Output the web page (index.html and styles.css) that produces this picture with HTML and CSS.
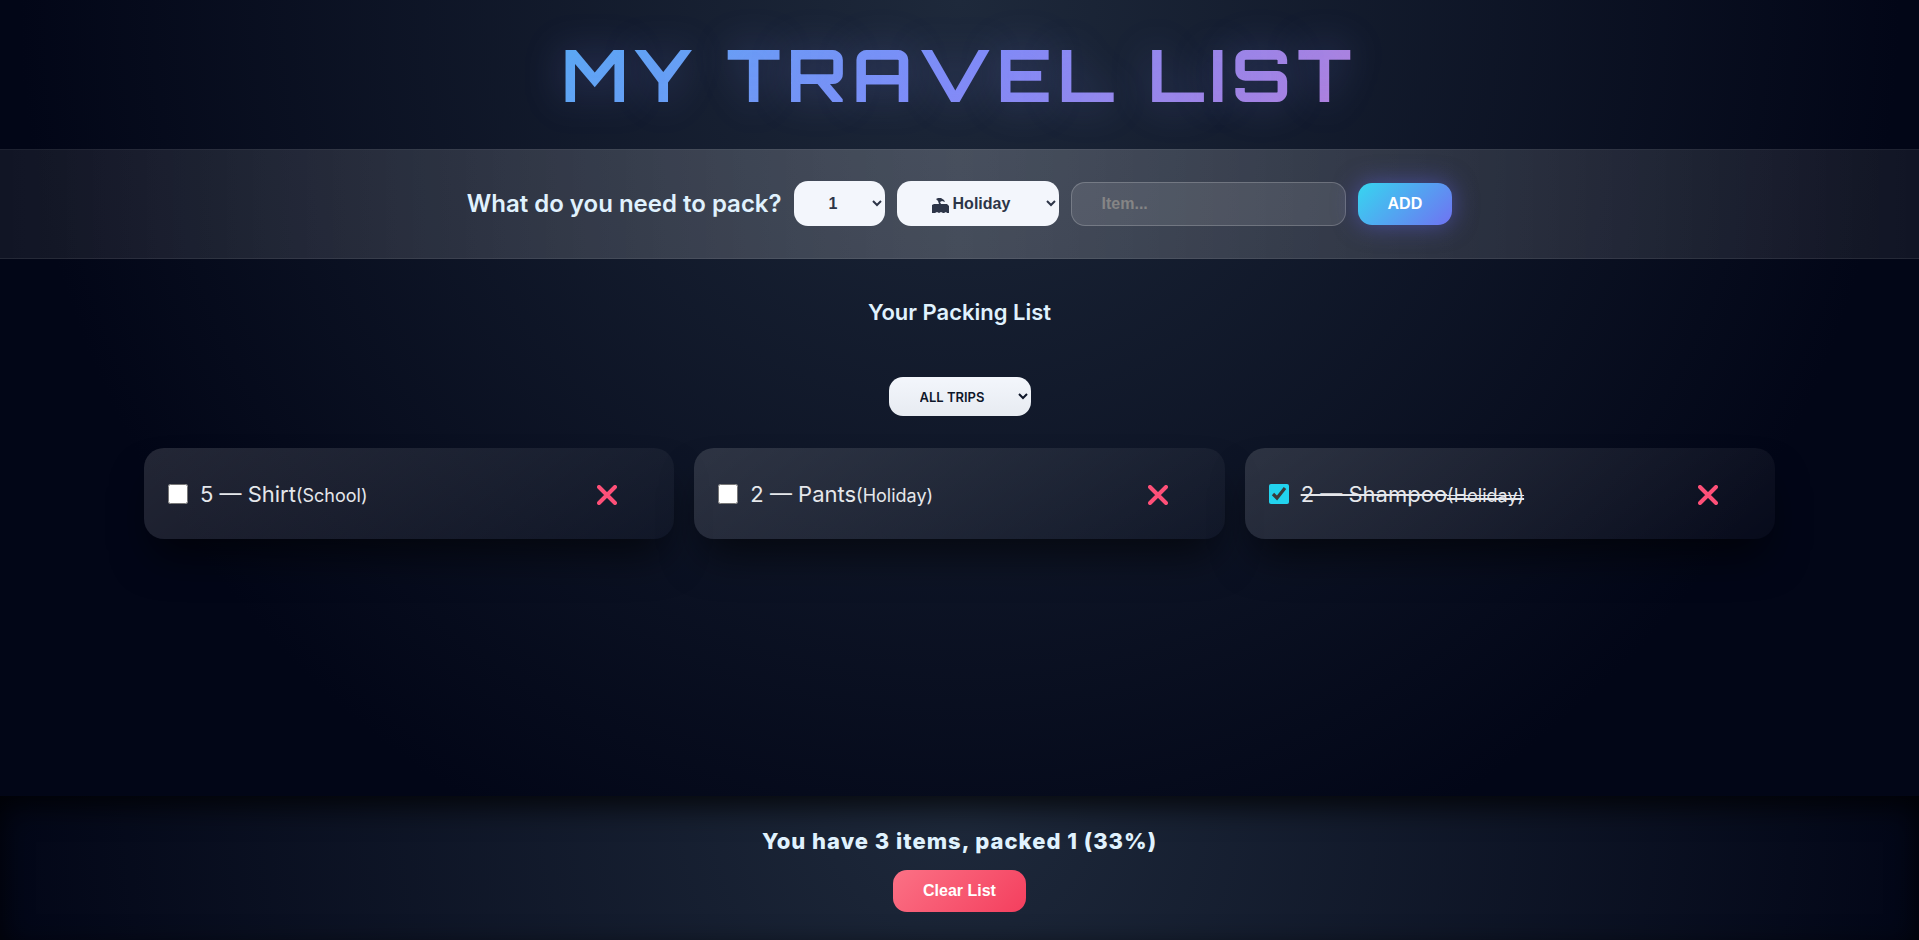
FILE: index.html
```html
<!DOCTYPE html>
<html lang="en">
<head>
    <meta charset="utf-8">
    <meta name="viewport" content="width=device-width, initial-scale=1">
    <title>My Travel List</title>
    <link rel="stylesheet" href="styles.css">
</head>
<body>
    <div class="app">
        <header class="header">
            <h1 class="title">My Travel List</h1>
        </header>

        <form class="add-form">
            <label class="add-label" for="item">What do you need to pack?</label>
            <select class="field qty" aria-label="Quantity">
                <option>1</option>
                <option>2</option>
                <option>3</option>
                <option>4</option>
                <option>5</option>
            </select>
            <div class="trip">
                <svg class="trip-icon" viewBox="0 0 17 17" aria-hidden="true">
                    <path d="M4 2 6 1H9L12 3 13 5 10 4 8 5 9 7H15L17 9V16H15L14 15 12 16H11L9 15 7 16 5 15 3 16H0V8L2 7H7L6 4Z"/>
                </svg>
                <select class="field trip-select" aria-label="Trip">
                    <option>Holiday</option>
                    <option>School</option>
                    <option>Work</option>
                </select>
            </div>
            <input class="item-input" id="item" type="text" placeholder="Item...">
            <button class="btn btn-add" type="submit">ADD</button>
        </form>

        <main class="list">
            <h2 class="list-title">Your Packing List</h2>
            <select class="filter" aria-label="Filter by trip">
                <option>ALL TRIPS</option>
                <option>HOLIDAY</option>
                <option>SCHOOL</option>
            </select>
            <ul class="items">
                <li class="item">
                    <input class="check" type="checkbox" id="item1">
                    <label class="item-text" for="item1">5 — Shirt<small>(School)</small></label>
                    <button class="remove" type="button" aria-label="Remove Shirt">
                        <svg viewBox="0 0 20 20"><path d="M2 2 18 18M18 2 2 18"/></svg>
                    </button>
                </li>
                <li class="item">
                    <input class="check" type="checkbox" id="item2">
                    <label class="item-text" for="item2">2 — Pants<small>(Holiday)</small></label>
                    <button class="remove" type="button" aria-label="Remove Pants">
                        <svg viewBox="0 0 20 20"><path d="M2 2 18 18M18 2 2 18"/></svg>
                    </button>
                </li>
                <li class="item">
                    <input class="check" type="checkbox" id="item3" checked>
                    <label class="item-text packed" for="item3">2 — Shampoo<small>(Holiday)</small></label>
                    <button class="remove" type="button" aria-label="Remove Shampoo">
                        <svg viewBox="0 0 20 20"><path d="M2 2 18 18M18 2 2 18"/></svg>
                    </button>
                </li>
            </ul>
        </main>

        <footer class="stats">
            <p class="stats-text">You have 3 items, packed 1 (33%)</p>
            <button class="btn btn-clear" type="button">Clear List</button>
        </footer>
    </div>
</body>
</html>
```
FILE: styles.css
```css
* {
    box-sizing: border-box;
    margin: 0;
    padding: 0;
}
body {
    font-family: Inter, "Liberation Sans", sans-serif;
    color: #e0f2fe;
    background-color: #020617;
}
.app {
    min-height: 100vh;
    display: flex;
    flex-direction: column;
    background: radial-gradient(circle at top, #1e293b, #020617 70%);
}

/* header */
.header {
    padding: 32px 0;
    text-align: center;
}
.title {
    font-family: Orbitron, "DejaVu Sans", sans-serif;
    font-size: 72px;
    line-height: 85px;
    font-weight: bold;
    letter-spacing: 6px;
    text-transform: uppercase;
    color: transparent;
    background: linear-gradient(135deg, #22d3ee, #818cf8, #f472b6);
    background-clip: text;
    -webkit-background-clip: text;
    text-shadow: 0 0 40px rgba(129, 140, 248, 0.3);
}

/* form */
.add-form {
    display: flex;
    flex-wrap: wrap;
    justify-content: center;
    align-items: center;
    gap: 12px;
    padding: 31px 0 32px;
    background: linear-gradient(90deg, rgba(255, 255, 255, 0.06), rgba(255, 255, 255, 0.2), rgba(255, 255, 255, 0.06));
    border-top: 1px solid rgba(255, 255, 255, 0.05);
    border-bottom: 1px solid rgba(255, 255, 255, 0.08);
}
.add-label {
    font-size: 24px;
    font-weight: 600;
}
.field, .item-input, .btn {
    font-family: "Liberation Sans", Arial, sans-serif;
    font-size: 16px;
    font-weight: bold;
    border: none;
    border-radius: 14px;
}
.field {
    height: 45px;
    padding: 0 26px;
    color: #2d3548;
    background: #f3f6fc;
    text-align: center;
}
.qty {
    width: 91px;
}
.trip {
    position: relative;
}
.trip-select {
    width: 162px;
    padding-left: 52px;
    text-align: left;
}
.trip-icon {
    position: absolute;
    left: 35px;
    top: 16px;
    width: 17px;
    height: 17px;
    fill: #2d3548;
    pointer-events: none;
}
.item-input {
    width: 275px;
    height: 44px;
    padding: 0 30px;
    color: #e0f2fe;
    background: rgba(255, 255, 255, 0.1);
    border: 1px solid rgba(255, 255, 255, 0.2);
}
.item-input::placeholder {
    color: #858585;
}
.btn {
    height: 42px;
    padding: 0 30px;
    color: #fff;
    cursor: pointer;
}
.btn-add {
    background: linear-gradient(135deg, #36d6f0, #7072f2);
    box-shadow: 0 0 24px rgba(99, 102, 241, 0.5);
}

/* list */
.list {
    flex: 1;
    display: flex;
    flex-direction: column;
    align-items: center;
    padding-top: 40px;
}
.list-title {
    font-size: 22px;
    line-height: 26px;
    font-weight: 600;
}
.filter {
    width: 142px;
    height: 39px;
    margin-top: 52px;
    padding: 0 27px;
    font-family: Inter, sans-serif;
    font-size: 13px;
    font-weight: 600;
    color: #0f172a;
    background: linear-gradient(#f3f6fc, #e7ebf1);
    border: none;
    border-radius: 14px;
}
.items {
    width: 85%;
    margin-top: 32px;
    display: grid;
    grid-template-columns: repeat(3, 1fr);
    gap: 20px;
    list-style: none;
}
.item {
    display: flex;
    align-items: center;
    gap: 12px;
    height: 91px;
    padding: 0 55px 0 24px;
    background: linear-gradient(145deg, rgba(255, 255, 255, 0.13), rgba(255, 255, 255, 0.02));
    border-radius: 20px;
    box-shadow: 0 25px 40px -10px rgba(0, 0, 0, 0.6);
}
.check {
    width: 20px;
    height: 20px;
    accent-color: #22d3ee;
}
.item-text {
    flex: 1;
    font-size: 22px;
    color: #e5e7eb;
}
.item-text small {
    font-size: 18px;
}
.packed, .packed small {
    text-decoration: line-through;
}
.remove {
    width: 24px;
    height: 24px;
    background: none;
    border: none;
    cursor: pointer;
}
.remove svg {
    display: block;
    width: 20px;
    height: 20px;
    margin: 2px auto 0;
    fill: none;
    stroke: #ff5078;
    stroke-width: 4;
    stroke-linecap: round;
}

/* footer */
.stats {
    padding: 32px 0 28px;
    text-align: center;
    background: radial-gradient(circle at top, #1e293b, #020617);
    box-shadow: inset 0 10px 30px rgba(0, 0, 0, 0.8);
}
.stats-text {
    margin-bottom: 16px;
    font-size: 22px;
    line-height: 26px;
    font-weight: 800;
    letter-spacing: 1px;
}
.btn-clear {
    background: linear-gradient(135deg, #fb7185, #f43f5e);
}
```
